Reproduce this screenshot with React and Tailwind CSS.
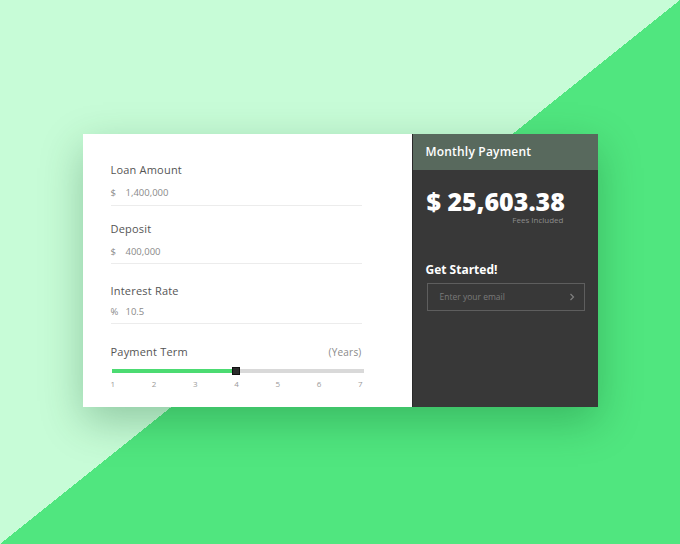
import React from "react";

const font = { fontFamily: '"Open Sans", "Liberation Sans", sans-serif' };

function Field({ label, prefix, value, labelTop, valueTop, pb }) {
  return (
    <div className={labelTop}>
      <div className="text-[11px] leading-[14px] text-[#555555] tracking-[0.2px]">{label}</div>
      <div className={`${valueTop} ${pb} w-[251px] border-b border-[#ececec] flex items-center text-[9.5px] leading-[14px] text-[#8a8a8a]`}>
        <span className="w-[15px]">{prefix}</span>
        <span>{value}</span>
      </div>
    </div>
  );
}

export default function App() {
  return (
    <div
      className="w-[680px] h-[544px] flex items-center justify-center bg-[linear-gradient(to_bottom_right,#c7fcd7_50%,#50e67f_50%)]"
      style={font}
    >
      <div className="w-[515px] h-[273px] flex mt-[-3px] shadow-[0_14px_40px_rgba(0,70,25,0.28)]">
        <div className="w-[329px] h-full bg-white pl-[28px] pt-[29px]">
          <Field label="Loan Amount" prefix="$" value="1,400,000" labelTop="" valueTop="mt-[9px]" pb="pb-[5px]" />
          <Field label="Deposit" prefix="$" value="400,000" labelTop="mt-[16px]" valueTop="mt-[9px]" pb="pb-[4px]" />
          <Field label="Interest Rate" prefix="%" value="10.5" labelTop="mt-[20px]" valueTop="mt-[7px]" pb="pb-[4px]" />
          <div className="mt-[21px] w-[251px]">
            <div className="flex justify-between text-[11px] leading-[14px] text-[#555555] tracking-[0.2px]">
              <span>Payment Term</span>
              <span className="text-[10px] text-[#8a8a8a]">(Years)</span>
            </div>
            <div className="relative mt-[10px] ml-[1px] w-[252px] h-[4px] bg-[#d9d9d9]">
              <div className="h-full w-[124px] bg-[#4cdb72]" />
              <div className="absolute left-[120px] top-[-2px] w-[8px] h-[8px] bg-[#2b2b2b] border border-[#111]" />
            </div>
            <div className="mt-[6px] w-[252px] flex justify-between text-[8px] leading-[10px] text-[#9a9a9a]">
              <span>1</span><span>2</span><span>3</span><span>4</span><span>5</span><span>6</span><span>7</span>
            </div>
          </div>
        </div>
        <div className="w-[186px] h-full bg-[#383838] border-l border-[#2a2a2a] flex flex-col">
          <div className="h-[36px] bg-[#58695d] flex items-center pl-[13px] text-[12px] font-semibold text-white tracking-[0.2px]">
            Monthly Payment
          </div>
          <div className="pl-[14px] pr-[34px] mt-[18px]">
            <div className="text-[25px] leading-[26px] font-extrabold text-white whitespace-nowrap">$ 25,603.38</div>
            <div className="text-right text-[8px] leading-[10px] text-[#8c8c8c] mt-[1px]">Fees Included</div>
          </div>
          <div className="pl-[13px] mt-[37px] text-[12px] leading-[16px] font-bold text-white">Get Started!</div>
          <div className="ml-[14px] mt-[5px] w-[158px] h-[28px] border border-[#5e5e5e] flex items-center justify-between pl-[12px] pr-[9px]">
            <span className="text-[8.5px] text-[#7a7a7a]">Enter your email</span>
            <svg width="6" height="8" viewBox="0 0 6 8" fill="none">
              <path d="M1.5 1 L4.5 4 L1.5 7" stroke="#808080" strokeWidth="1.2" />
            </svg>
          </div>
        </div>
      </div>
    </div>
  );
}
